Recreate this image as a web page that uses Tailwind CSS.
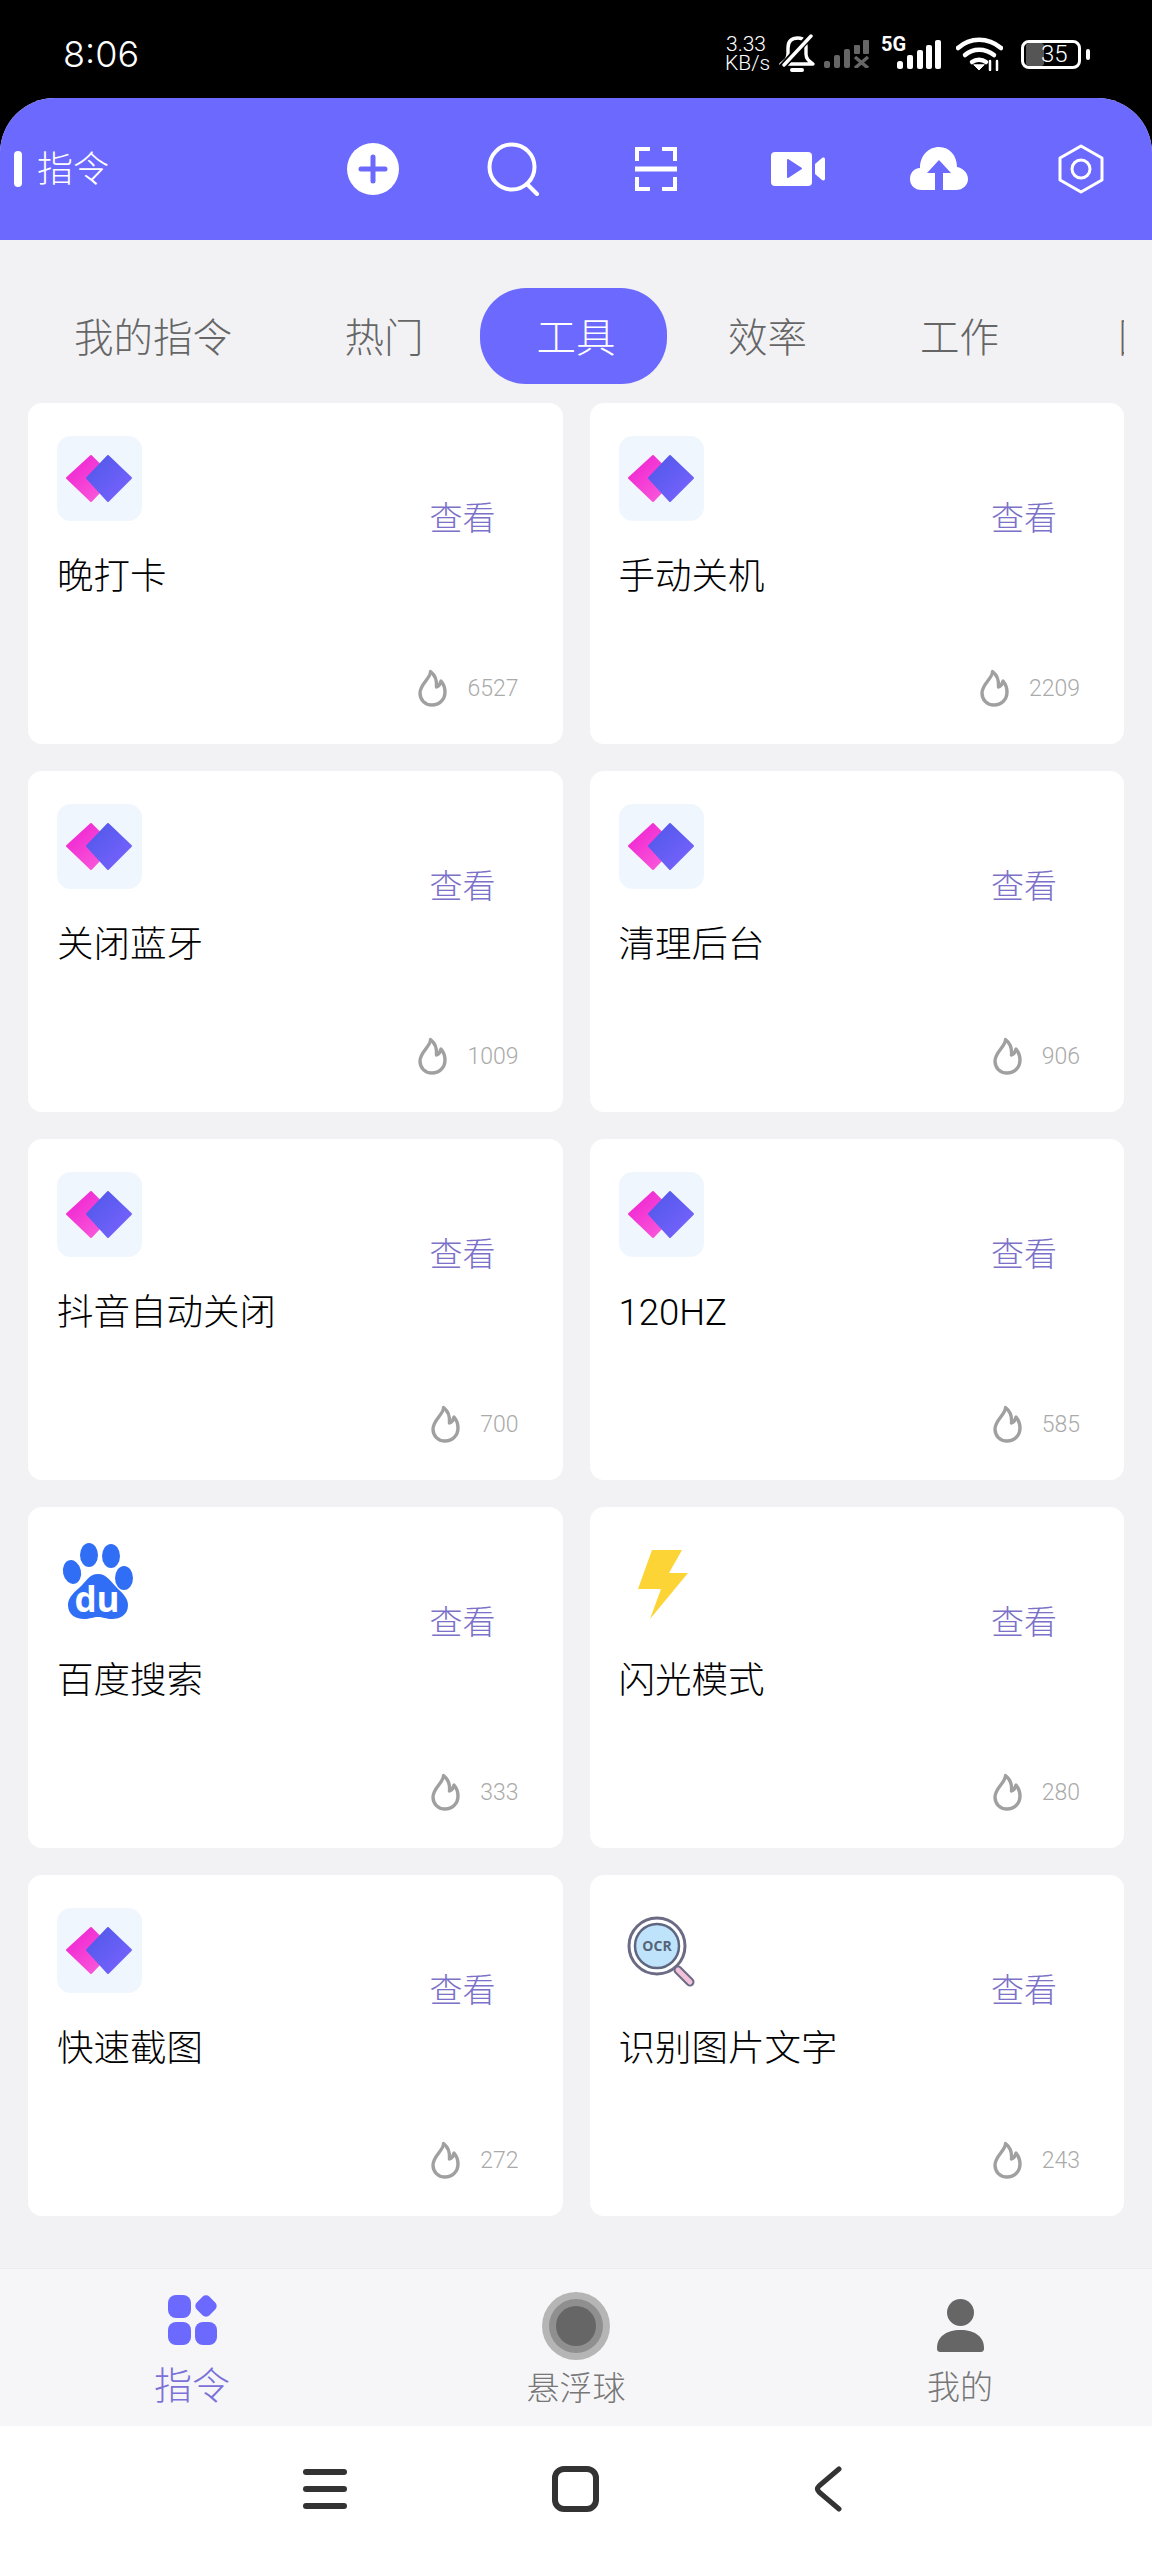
<!DOCTYPE html>
<html lang="en">
<head>
  <meta charset="UTF-8" />
  <title>指令</title>
  <meta name="viewport" content="width=device-width, initial-scale=1" />
  <script src="https://cdn.jsdelivr.net/npm/@tailwindcss/browser@4"></script>
</head>
<body class="bg-black font-['Roboto','Noto_Sans_CJK_SC',sans-serif]">

  <!-- shared icons -->
  <svg class="w-0 h-0" aria-hidden="true">
    <defs>
      <linearGradient id="pink" x1="0" y1="0" x2="1" y2="1"><stop offset="0" stop-color="#ee1fd0" /><stop offset="1" stop-color="#fb63dc" /></linearGradient>
      <linearGradient id="blue" x1="0" y1="0" x2="1" y2="1"><stop offset="0" stop-color="#4f58e8" /><stop offset="1" stop-color="#7a63ff" /></linearGradient>
      <symbol id="shortcut" viewBox="0 0 85 85">
        <rect width="85" height="85" rx="14" fill="#eff6fe" />
        <path d="M10 42 L34 20 L56 42 L34 65 Z" fill="url(#pink)" stroke="url(#pink)" stroke-width="2" stroke-linejoin="round" />
        <path d="M30 42 L51 20 L74 42 L51 65 Z" fill="url(#blue)" stroke="url(#blue)" stroke-width="2" stroke-linejoin="round" />
      </symbol>
      <symbol id="flame" viewBox="0 0 30 38">
        <path d="M12.5 2.5 C13 9 2 15 2 24 C2 31 7 36 14 36 C21 36 27 31 27 23 C27 19 25.5 15 23 12 C22.5 15 21 17 18.5 18 C19 12 17 6 12.5 2.5 Z" fill="none" stroke="#a0a0a0" stroke-width="3.4" stroke-linejoin="round" />
      </symbol>
    </defs>
  </svg>

  <div class="w-[1152px] h-[2560px] flex flex-col overflow-hidden">

    <!-- status bar -->
    <div class="h-[98px] shrink-0 bg-black text-white flex items-center justify-between pl-[63px] pr-[62px] pt-[10px]">
      <span class="font-['Inter'] text-[36px] leading-none font-light">8:06</span>
      <div class="flex items-center">
        <div class="w-[42px] text-[21px] leading-[19px] text-center font-light"><div>3.33</div><div>KB/s</div></div>
        <svg class="ml-[11px] w-[38px] h-[40px]" viewBox="0 0 38 40" fill="none" stroke="#fff" stroke-width="3.4" stroke-linecap="round" stroke-linejoin="round">
          <path d="M10 14 C10 7 14 4 20 4 C26 4 28 8 28 12 L28 20 C28 25 31 27 35 30 L3 30 C7 27 10 25 10 20 Z" />
          <path d="M33 1 L5 32" stroke="#000" stroke-width="7" />
          <path d="M33 2 L6 31" />
          <path d="M14 36 L24 36" stroke-width="4" />
        </svg>
        <svg class="ml-[8px] w-[46px] h-[28px]" viewBox="0 0 46 28" fill="#666">
          <rect x="0" y="21" width="6" height="7" rx="2" /><rect x="10" y="15" width="6" height="13" rx="2" /><rect x="20" y="9" width="6" height="19" rx="2" /><rect x="30" y="5" width="6" height="9" rx="1" /><rect x="39" y="0" width="6" height="14" rx="1" />
          <path d="M31 17 L44 28 M44 17 L31 28" stroke="#666" stroke-width="3.5" />
        </svg>
        <div class="ml-[11px] w-[60px] h-[32px] relative">
          <span class="absolute left-0 -top-[4px] text-[20px] leading-none font-bold">5G</span>
          <svg class="absolute left-[16px] top-[2px] w-[44px] h-[29px]" viewBox="0 0 44 29" fill="#fff">
            <rect x="0" y="21" width="6" height="8" rx="2.5" /><rect x="10" y="15" width="6" height="14" rx="2" /><rect x="20" y="10" width="6" height="19" rx="2" /><rect x="29" y="5" width="6" height="24" rx="2" /><rect x="38" y="0" width="6" height="29" rx="2" />
          </svg>
        </div>
        <svg class="ml-[15px] w-[47px] h-[34px]" viewBox="0 0 47 34" fill="none" stroke="#fff" stroke-width="4.5" stroke-linecap="round">
          <path d="M2 11 C14 0 32 0 45 11" />
          <path d="M9 18 C17 11 29 11 38 18" />
          <path d="M16 25 C20 22 26 22 30 25" />
          <path d="M18 28 L23 33 L28 28 Z" fill="#fff" stroke-width="1" />
          <path d="M34 24 V33 M41 24 V33" stroke-width="2.5" />
        </svg>
        <div class="ml-[18px] w-[60px] h-[29px] rounded-[8px] border-[3px] border-white flex items-center relative overflow-hidden">
          <div class="w-[18px] h-full bg-[#555] ml-[2px] rounded-[3px]"></div>
          <span class="absolute left-[17px] text-[24px] leading-none font-light">35</span>
        </div>
        <div class="ml-[5px] w-[4px] h-[11px] bg-white rounded-full"></div>
      </div>
    </div>

    <!-- app -->
    <div class="flex-1 flex flex-col bg-[#f2f2f5] rounded-t-[55px] overflow-hidden">

      <!-- header -->
      <header class="h-[142px] shrink-0 bg-[#6c69fe] flex items-center text-white">
        <div class="w-[302px] flex items-center pl-[14px]">
          <div class="w-[8px] h-[36px] rounded-full bg-white"></div>
          <span class="ml-[15px] pt-[2px] text-[36px] leading-none font-light">指令</span>
        </div>
        <div class="flex-1 grid grid-cols-6 items-center">
          <div class="flex justify-center">
            <svg class="w-[52px] h-[52px]" viewBox="0 0 52 52"><circle cx="26" cy="26" r="26" fill="#fff" /><path d="M26 14 V38 M14 26 H38" stroke="#6c69fe" stroke-width="5" stroke-linecap="round" /></svg>
          </div>
          <div class="flex justify-center">
            <svg class="w-[54px] h-[54px]" viewBox="0 0 54 54" fill="none" stroke="#fff" stroke-width="4" stroke-linecap="round"><circle cx="25" cy="25" r="22.5" /><path d="M40 42 L50 52" /></svg>
          </div>
          <div class="flex justify-center">
            <svg class="w-[42px] h-[44px]" viewBox="0 0 42 44" fill="none" stroke="#fff" stroke-width="4"><path d="M2 14 V2 H15 M27 2 H40 V14 M2 30 V42 H15 M27 42 H40 V30" /><path d="M0 22 H42" stroke-width="5" /></svg>
          </div>
          <div class="flex justify-center">
            <svg class="w-[56px] h-[36px]" viewBox="0 0 56 36"><rect x="1" y="1" width="41" height="34" rx="4" fill="#fff" /><path d="M18 9 L31 17.500 L18 26 Z" fill="#6c69fe" stroke="#6c69fe" stroke-width="2" stroke-linejoin="round" /><path d="M45 13 L52 7 C53.500 6 55 6.500 55 8.500 V27.500 C55 29.500 53.500 30 52 29 L45 23 Z" fill="#fff" /></svg>
          </div>
          <div class="flex justify-center">
            <svg class="w-[58px] h-[44px]" viewBox="0 0 58 44"><path d="M12 43 C4 43 0 38 0 32 C0 26 4 21 10 21 C10 9 18 0 29 0 C40 0 47 9 47 20 C53 21 58 26 58 32 C58 38 53 43 46 43 Z" fill="#fff" /><path d="M29 13 L41 26 H33 V43 H25 V26 H17 Z" fill="#6c69fe" /></svg>
          </div>
          <div class="flex justify-center">
            <svg class="w-[46px] h-[50px]" viewBox="0 0 46 50" fill="none" stroke="#fff" stroke-width="3"><path d="M23 2 L44 14 V36 L23 48 L2 36 V14 Z" stroke-linejoin="round" /><circle cx="23" cy="25" r="9" /></svg>
          </div>
        </div>
      </header>

      <!-- tabs -->
      <nav class="w-[1124px] mt-[48px] h-[96px] shrink-0 flex items-center gap-[5px] pl-[20px] overflow-hidden text-[39.5px] text-[#666] font-light whitespace-nowrap">
        <a class="pt-[6px] px-[54px] shrink-0">我的指令</a>
        <a class="pt-[6px] px-[53.5px] shrink-0 mr-[-2px]">热门</a>
        <a class="h-[96px] w-[187px] pt-[6px] pl-[5px] shrink-0 flex items-center justify-center rounded-[46px] bg-[#6c69fe] text-white">工具</a>
        <a class="pt-[6px] px-[54px] ml-[2px] shrink-0">效率</a>
        <a class="pt-[6px] px-[54px] shrink-0">工作</a>
        <a class="pt-[6px] pl-[60px] shrink-0">图片</a>
      </nav>

      <!-- cards -->
      <main class="mt-[19px] mx-[28px] grid grid-cols-2 gap-x-[27px] gap-y-[27px] auto-rows-[341px]">

        <article class="bg-white rounded-[14px] flex flex-col pt-[33px] pl-[29px]">
          <div class="flex items-start justify-between pr-[67px]">
            <svg class="w-[85px] h-[85px]"><use href="#shortcut" /></svg>
            <span class="mt-[64px] text-[33px] leading-[38px] text-[#7b71c8] font-light">查看</span>
          </div>
          <h3 class="mt-[17px] text-[36.5px] leading-[44px] text-black font-light">晚打卡</h3>
          <div class="mt-auto mb-[37px] pr-[44px] flex items-center justify-end gap-[19px]">
            <svg class="w-[30px] h-[38px]"><use href="#flame" /></svg>
            <span class="text-[23px] leading-none text-[#aaa] font-light">6527</span>
          </div>
        </article>

        <article class="bg-white rounded-[14px] flex flex-col pt-[33px] pl-[29px]">
          <div class="flex items-start justify-between pr-[67px]">
            <svg class="w-[85px] h-[85px]"><use href="#shortcut" /></svg>
            <span class="mt-[64px] text-[33px] leading-[38px] text-[#7b71c8] font-light">查看</span>
          </div>
          <h3 class="mt-[17px] text-[36.5px] leading-[44px] text-black font-light">手动关机</h3>
          <div class="mt-auto mb-[37px] pr-[44px] flex items-center justify-end gap-[19px]">
            <svg class="w-[30px] h-[38px]"><use href="#flame" /></svg>
            <span class="text-[23px] leading-none text-[#aaa] font-light">2209</span>
          </div>
        </article>

        <article class="bg-white rounded-[14px] flex flex-col pt-[33px] pl-[29px]">
          <div class="flex items-start justify-between pr-[67px]">
            <svg class="w-[85px] h-[85px]"><use href="#shortcut" /></svg>
            <span class="mt-[64px] text-[33px] leading-[38px] text-[#7b71c8] font-light">查看</span>
          </div>
          <h3 class="mt-[17px] text-[36.5px] leading-[44px] text-black font-light">关闭蓝牙</h3>
          <div class="mt-auto mb-[37px] pr-[44px] flex items-center justify-end gap-[19px]">
            <svg class="w-[30px] h-[38px]"><use href="#flame" /></svg>
            <span class="text-[23px] leading-none text-[#aaa] font-light">1009</span>
          </div>
        </article>

        <article class="bg-white rounded-[14px] flex flex-col pt-[33px] pl-[29px]">
          <div class="flex items-start justify-between pr-[67px]">
            <svg class="w-[85px] h-[85px]"><use href="#shortcut" /></svg>
            <span class="mt-[64px] text-[33px] leading-[38px] text-[#7b71c8] font-light">查看</span>
          </div>
          <h3 class="mt-[17px] text-[36.5px] leading-[44px] text-black font-light">清理后台</h3>
          <div class="mt-auto mb-[37px] pr-[44px] flex items-center justify-end gap-[19px]">
            <svg class="w-[30px] h-[38px]"><use href="#flame" /></svg>
            <span class="text-[23px] leading-none text-[#aaa] font-light">906</span>
          </div>
        </article>

        <article class="bg-white rounded-[14px] flex flex-col pt-[33px] pl-[29px]">
          <div class="flex items-start justify-between pr-[67px]">
            <svg class="w-[85px] h-[85px]"><use href="#shortcut" /></svg>
            <span class="mt-[64px] text-[33px] leading-[38px] text-[#7b71c8] font-light">查看</span>
          </div>
          <h3 class="mt-[17px] text-[36.5px] leading-[44px] text-black font-light">抖音自动关闭</h3>
          <div class="mt-auto mb-[37px] pr-[44px] flex items-center justify-end gap-[19px]">
            <svg class="w-[30px] h-[38px]"><use href="#flame" /></svg>
            <span class="text-[23px] leading-none text-[#aaa] font-light">700</span>
          </div>
        </article>

        <article class="bg-white rounded-[14px] flex flex-col pt-[33px] pl-[29px]">
          <div class="flex items-start justify-between pr-[67px]">
            <svg class="w-[85px] h-[85px]"><use href="#shortcut" /></svg>
            <span class="mt-[64px] text-[33px] leading-[38px] text-[#7b71c8] font-light">查看</span>
          </div>
          <h3 class="mt-[17px] text-[36.5px] leading-[44px] text-black font-light">120HZ</h3>
          <div class="mt-auto mb-[37px] pr-[44px] flex items-center justify-end gap-[19px]">
            <svg class="w-[30px] h-[38px]"><use href="#flame" /></svg>
            <span class="text-[23px] leading-none text-[#aaa] font-light">585</span>
          </div>
        </article>

        <article class="bg-white rounded-[14px] flex flex-col pt-[33px] pl-[29px]">
          <div class="flex items-start justify-between pr-[67px]">
            <svg class="w-[85px] h-[85px]" viewBox="0 0 85 85">
              <ellipse cx="15" cy="32" rx="9" ry="12" fill="#306ff5" transform="rotate(-12 15 32)" />
              <ellipse cx="32" cy="15" rx="9" ry="12" fill="#306ff5" />
              <ellipse cx="54" cy="16" rx="9" ry="12" fill="#306ff5" />
              <ellipse cx="67" cy="38" rx="9" ry="12" fill="#306ff5" />
              <path d="M41 34 C50 34 54 42 61 49 C68 55 71 60 71 65 C71 75 63 79 55 79 C49 79 46 77 41 77 C36 77 33 79 27 79 C18 79 11 74 11 65 C11 59 15 54 22 48 C29 42 32 34 41 34 Z" fill="#306ff5" />
              <text x="40" y="72" text-anchor="middle" font-size="35" font-weight="700" fill="#fff" font-family="Open Sans">du</text>
            </svg>
            <span class="mt-[64px] text-[33px] leading-[38px] text-[#7b71c8] font-light">查看</span>
          </div>
          <h3 class="mt-[17px] text-[36.5px] leading-[44px] text-black font-light">百度搜索</h3>
          <div class="mt-auto mb-[37px] pr-[44px] flex items-center justify-end gap-[19px]">
            <svg class="w-[30px] h-[38px]"><use href="#flame" /></svg>
            <span class="text-[23px] leading-none text-[#aaa] font-light">333</span>
          </div>
        </article>

        <article class="bg-white rounded-[14px] flex flex-col pt-[33px] pl-[29px]">
          <div class="flex items-start justify-between pr-[67px]">
            <svg class="w-[85px] h-[85px]" viewBox="0 0 85 85"><path d="M33 10 H63 L50 33 H69 L31 79 L42 49 H19 Z" fill="#fcd435" /></svg>
            <span class="mt-[64px] text-[33px] leading-[38px] text-[#7b71c8] font-light">查看</span>
          </div>
          <h3 class="mt-[17px] text-[36.5px] leading-[44px] text-black font-light">闪光模式</h3>
          <div class="mt-auto mb-[37px] pr-[44px] flex items-center justify-end gap-[19px]">
            <svg class="w-[30px] h-[38px]"><use href="#flame" /></svg>
            <span class="text-[23px] leading-none text-[#aaa] font-light">280</span>
          </div>
        </article>

        <article class="bg-white rounded-[14px] flex flex-col pt-[33px] pl-[29px]">
          <div class="flex items-start justify-between pr-[67px]">
            <svg class="w-[85px] h-[85px]"><use href="#shortcut" /></svg>
            <span class="mt-[64px] text-[33px] leading-[38px] text-[#7b71c8] font-light">查看</span>
          </div>
          <h3 class="mt-[17px] text-[36.5px] leading-[44px] text-black font-light">快速截图</h3>
          <div class="mt-auto mb-[37px] pr-[44px] flex items-center justify-end gap-[19px]">
            <svg class="w-[30px] h-[38px]"><use href="#flame" /></svg>
            <span class="text-[23px] leading-none text-[#aaa] font-light">272</span>
          </div>
        </article>

        <article class="bg-white rounded-[14px] flex flex-col pt-[33px] pl-[29px]">
          <div class="flex items-start justify-between pr-[67px]">
            <svg class="w-[85px] h-[85px]" viewBox="0 0 85 85">
              <path d="M59 62 L71 74" stroke="#6b6b85" stroke-width="9" stroke-linecap="round" />
              <path d="M59 62 L71 74" stroke="#f3c1d9" stroke-width="5" stroke-linecap="round" />
              <circle cx="38" cy="38" r="28" fill="#fff" stroke="#6b6b85" stroke-width="3" />
              <circle cx="38" cy="38" r="22" fill="#bfe3fb" stroke="#5f6680" stroke-width="2.500" />
              <text x="38" y="43" text-anchor="middle" font-size="14" font-weight="700" fill="#566478" font-family="Open Sans">OCR</text>
            </svg>
            <span class="mt-[64px] text-[33px] leading-[38px] text-[#7b71c8] font-light">查看</span>
          </div>
          <h3 class="mt-[17px] text-[36.5px] leading-[44px] text-black font-light">识别图片文字</h3>
          <div class="mt-auto mb-[37px] pr-[44px] flex items-center justify-end gap-[19px]">
            <svg class="w-[30px] h-[38px]"><use href="#flame" /></svg>
            <span class="text-[23px] leading-none text-[#aaa] font-light">243</span>
          </div>
        </article>

      </main>

      <!-- bottom tabs -->
      <footer class="mt-auto h-[158px] shrink-0 bg-[#f6f6f8] border-t border-[#ececee] grid grid-cols-3">
        <div class="flex flex-col items-center pt-[26px]">
          <svg class="w-[51px] h-[51px]" viewBox="0 0 51 51" fill="#6c69fe">
            <rect x="1" y="0" width="23" height="23" rx="8" />
            <rect x="30" y="2" width="18" height="18" rx="5" transform="rotate(45 39 11)" />
            <rect x="1" y="27" width="23" height="23" rx="8" />
            <rect x="28" y="27" width="22" height="23" rx="8" />
          </svg>
          <span class="mt-[20px] text-[38px] leading-[40px] text-[#7b71d8] font-light">指令</span>
        </div>
        <div class="flex flex-col items-center pt-[23px]">
          <div class="w-[68px] h-[68px] rounded-full bg-[#b5b5b5] flex items-center justify-center">
            <div class="w-[54px] h-[54px] rounded-full bg-[#8f8f8f] flex items-center justify-center">
              <div class="w-[40px] h-[40px] rounded-full bg-[#666]"></div>
            </div>
          </div>
          <span class="mt-[9px] text-[33px] leading-[40px] text-[#777] font-light">悬浮球</span>
        </div>
        <div class="flex flex-col items-center pt-[30px]">
          <svg class="w-[47px] h-[53px]" viewBox="0 0 47 53" fill="#666">
            <ellipse cx="23.500" cy="13.500" rx="13.500" ry="13.500" />
            <path d="M0 49 C0 38 9 31 23.500 31 C38 31 47 38 47 49 C47 52 46 53 43 53 H4 C1 53 0 52 0 49 Z" />
          </svg>
          <span class="mt-[16px] text-[33px] leading-[40px] text-[#777] font-light">我的</span>
        </div>
      </footer>

      <!-- system nav -->
      <div class="h-[134px] shrink-0 bg-white flex items-center pl-[303px] pb-[8px]">
        <svg class="w-[44px] h-[40px]" viewBox="0 0 44 40" fill="#333"><rect y="0" width="44" height="6" rx="3" /><rect y="17" width="44" height="6" rx="3" /><rect y="34" width="44" height="6" rx="3" /></svg>
        <svg class="ml-[205px] w-[47px] h-[46px]" viewBox="0 0 47 46" fill="none" stroke="#333" stroke-width="6"><rect x="3" y="3" width="41" height="40" rx="9" /></svg>
        <svg class="ml-[215px] w-[28px] h-[46px]" viewBox="0 0 28 46" fill="none" stroke="#333" stroke-width="5" stroke-linecap="round" stroke-linejoin="round"><path d="M25 3 L5 20 C3 22 3 24 5 26 L25 43" /></svg>
      </div>
    </div>
  </div>

</body>
</html>
